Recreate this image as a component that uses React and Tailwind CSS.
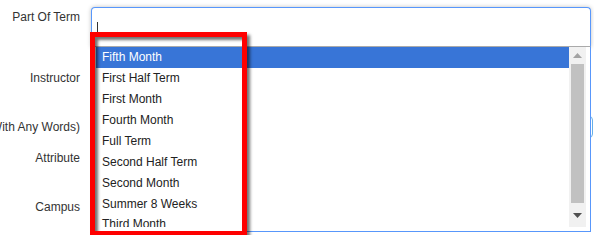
import React from 'react';

const OPTIONS = [
  'Fifth Month',
  'First Half Term',
  'First Month',
  'Fourth Month',
  'Full Term',
  'Second Half Term',
  'Second Month',
  'Summer 8 Weeks',
  'Third Month',
  'Third Half Term',
];

const Label = ({ children, className = '' }) => (
  <div className={`w-[80px] shrink-0 whitespace-nowrap flex justify-end text-[12px] leading-[14px] text-[#333] ${className}`}>
    <span>{children}</span>
  </div>
);

const Scrollbar = () => (
  <div className="w-[17px] h-[180px] bg-[#f1f1f1] flex flex-col items-center shrink-0">
    {/* up arrow */}
    <div className="h-[17px] w-full flex items-center justify-center">
      <svg width="9" height="5" viewBox="0 0 9 5"><path d="M0 5 L4.5 0 L9 5 Z" fill="#a3a3a3" /></svg>
    </div>
    <div className="w-[13px] h-[139px] bg-[#c1c1c1]" />
    <div className="flex-1 w-full flex items-center justify-center">
      <svg width="9" height="5" viewBox="0 0 9 5"><path d="M0 0 L9 0 L4.5 5 Z" fill="#505050" /></svg>
    </div>
  </div>
);

const Dropdown = () => (
  <div className="absolute left-0 top-[40px] w-[500px] h-[185px] bg-white border border-t-0 border-[#5897fb] flex pl-[4px] pr-[4px] pb-[4px]">
    <ul className="flex-1 h-[180px] overflow-hidden">
      {OPTIONS.map((o, i) => (
        <li
          key={o}
          className={`h-[20.875px] flex items-center pl-[6px] text-[12px] ${i === 0 ? 'bg-[#3875d7] text-white' : 'text-[#222]'}`}
        >
          {o}
        </li>
      ))}
    </ul>
    <Scrollbar />
  </div>
);

export default function App() {
  return (
    <div className="relative w-[594px] h-[235px] overflow-hidden bg-white font-['Liberation_Sans',Arial,sans-serif]">
      <div className="flex flex-col">
        {/* Part Of Term */}
        <div className="flex pt-[7px]">
          <Label className="mt-[3px]">Part Of Term</Label>
          <div className="relative ml-[11px] z-10">
            <div className="w-[500px] h-[40px] border border-[#5897fb] border-b-[#aaa] rounded-t-[4px] bg-white shadow-[0_0_4px_rgba(0,0,0,0.25)] pl-[5px] pt-[14px]">
              <div className="w-px h-[10px] bg-[#333]" />
            </div>
            <Dropdown />
          </div>
        </div>

        {/* Instructor */}
        <div className="flex mt-[24px]">
          <Label>Instructor</Label>
        </div>

        {/* Keywords */}
        <div className="flex items-center mt-[31px]">
          <Label>Keywords (With Any Words)</Label>
          <div className="ml-[11px] w-[502px] h-[22px] border border-[#66afe9] rounded-[4px]" />
        </div>

        {/* Attribute */}
        <div className="flex mt-[13px]">
          <Label>Attribute</Label>
        </div>

        {/* Campus */}
        <div className="flex mt-[35px]">
          <Label>Campus</Label>
        </div>
      </div>

      {/* annotation box */}
      <div className="absolute left-[90px] top-[32px] w-[157px] h-[204px] border-[5px] border-[#fe0000] z-20 shadow-[3px_3px_3px_rgba(0,0,0,0.55),inset_3px_3px_3px_rgba(0,0,0,0.55)]" />
    </div>
  );
}
